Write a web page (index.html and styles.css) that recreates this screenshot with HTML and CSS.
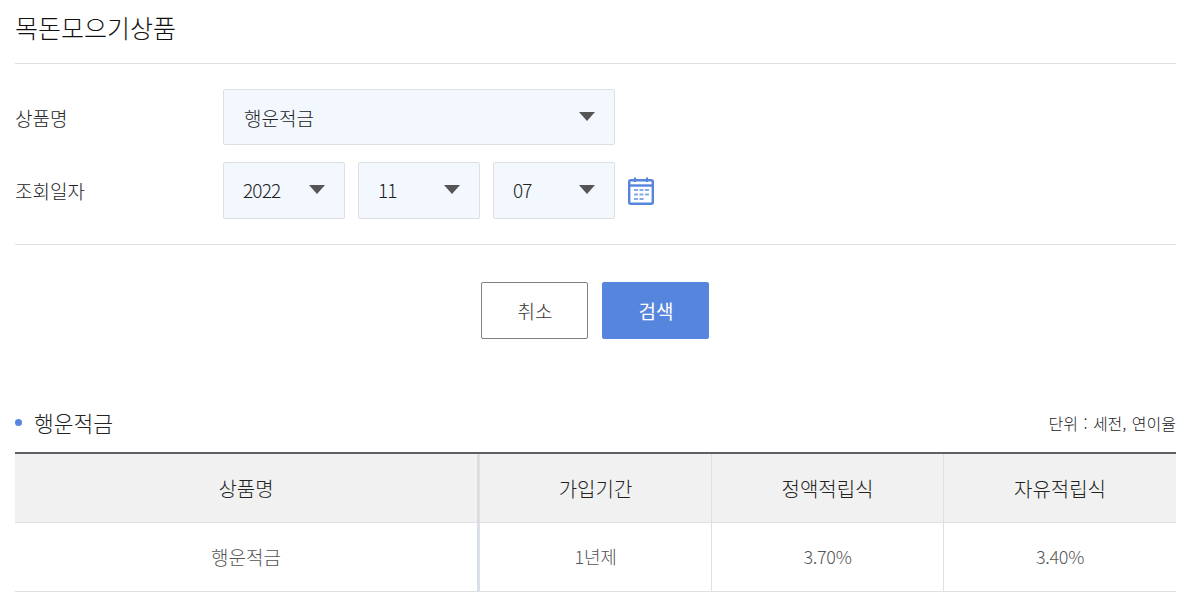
FILE: index.html
```html
<!DOCTYPE html>
<html lang="ko">
<head>
    <meta charset="UTF-8">
    <title>목돈모으기상품</title>
    <link rel="stylesheet" href="styles.css">
</head>
<body>
    <h1 class="page-title">목돈모으기상품</h1>

    <div class="search-form">
        <div class="form-row">
            <span class="form-label">상품명</span>
            <div class="select select-wide">행운적금<i class="arrow"></i></div>
        </div>
        <div class="form-row">
            <span class="form-label">조회일자</span>
            <div class="select select-date num">2022<i class="arrow"></i></div>
            <div class="select select-date num">11<i class="arrow"></i></div>
            <div class="select select-date num">07<i class="arrow"></i></div>
            <svg class="calendar" width="26" height="28" viewBox="0 0 26 28">
                <rect x="1.2" y="3.2" width="23.600" height="23.600" rx="1.500" fill="#fff" stroke="#5585dc" stroke-width="2.400"/>
                <path d="M1 8.500H25" stroke="#5585dc" stroke-width="2.400"/>
                <path d="M7 0.500V5M19 0.500V5" stroke="#5585dc" stroke-width="2"/>
                <path d="M6 13H10M11.500 13H15.500M17 13H21M6 17.500H10M11.500 17.500H15.500M17 17.500H21M6 22H10M11.500 22H15.500" stroke="#86a9e8" stroke-width="2.200"/>
            </svg>
        </div>
    </div>

    <div class="button-row">
        <button class="btn btn-cancel">취소</button>
        <button class="btn btn-search">검색</button>
    </div>

    <div class="result-head">
        <h2 class="result-title">행운적금</h2>
        <span class="unit">단위 : 세전, 연이율</span>
    </div>

    <table class="result-table">
        <colgroup>
            <col class="col-name">
            <col class="col-term">
            <col class="col-term">
            <col>
        </colgroup>
        <thead>
            <tr>
                <th class="first">상품명</th>
                <th>가입기간</th>
                <th>정액적립식</th>
                <th>자유적립식</th>
            </tr>
        </thead>
        <tbody>
            <tr>
                <td class="first">행운적금</td>
                <td class="num">1년제</td>
                <td class="num">3.70%</td>
                <td class="num">3.40%</td>
            </tr>
        </tbody>
    </table>
</body>
</html>
```

FILE: styles.css
```css
* {
    box-sizing: border-box;
}

body {
    margin: 0;
    padding: 0 23px 0 15px;
    background: #fff;
    color: #222;
    font-family: "Noto Sans CJK KR", "Noto Sans", sans-serif;
    font-size: 18px;
    font-weight: 300;
    overflow: hidden;
}

.page-title {
    margin: 0;
    height: 64px;
    padding-top: 9px;
    border-bottom: 1px solid #e0e0e0;
    font-size: 25px;
    line-height: 36px;
    font-weight: 300;
    color: #111;
}

.search-form {
    padding: 25px 0 25px;
    border-bottom: 1px solid #e0e0e0;
}

.form-row {
    display: flex;
    align-items: center;
    gap: 13px;
    margin-bottom: 17px;
}

.form-row:last-child {
    margin-bottom: 0;
}

.form-label {
    width: 195px;
    font-size: 19px;
}

.select {
    position: relative;
    display: flex;
    align-items: center;
    padding-left: 20px;
    background: #f3f8fe;
    border: 1px solid #dcdfe3;
    border-radius: 2px;
    font-size: 19px;
}

.select-wide {
    width: 392px;
    height: 56px;
}

.select-date {
    width: 122px;
    height: 57px;
}

.select.num {
    padding-left: 19px;
    padding-bottom: 2px;
    font-size: 19px;
    letter-spacing: -0.8px;
}

.arrow {
    position: absolute;
    right: 19px;
    top: 22px;
    width: 0;
    height: 0;
    border-left: 8.500px solid transparent;
    border-right: 8.500px solid transparent;
    border-top: 9px solid #555;
}

.calendar {
    display: block;
}

.button-row {
    display: flex;
    justify-content: center;
    gap: 14px;
    padding: 37px 2px 0 0;
}

.btn {
    width: 107px;
    height: 57px;
    padding-left: 8px;
    border-radius: 2px;
    font-family: inherit;
    font-size: 19px;
    font-weight: 300;
}

.btn-cancel {
    background: #fff;
    border: 1px solid #808080;
    color: #333;
}

.btn-search {
    background: #5585dc;
    border: 1px solid #5585dc;
    color: #fff;
    font-weight: 400;
}

.result-head {
    display: flex;
    justify-content: space-between;
    align-items: center;
    height: 40px;
    margin-top: 63px;
    margin-bottom: 10px;
}

.result-title {
    position: relative;
    margin: 0;
    padding-left: 19px;
    font-size: 21.500px;
    font-weight: 300;
}

.result-title::before {
    content: "";
    position: absolute;
    left: 0;
    top: 50%;
    width: 7px;
    height: 7px;
    margin-top: -3px;
    border-radius: 50%;
    background: #5585dc;
}

.unit {
    padding-top: 2px;
    font-size: 16px;
    word-spacing: 1px;
}

.result-table {
    width: 100%;
    table-layout: fixed;
    border-collapse: separate;
    border-spacing: 0;
    border-top: 2px solid #5f6066;
}

.col-name {
    width: 464px;
}

.col-term {
    width: 232px;
}

.result-table th,
.result-table td {
    text-align: center;
    font-weight: 300;
    border-left: 1px solid #dfe0e2;
    border-bottom: 1px solid #dfe0e2;
}

.result-table th {
    height: 69px;
    background: #f1f1f1;
    font-size: 20px;
}

.result-table td {
    height: 69px;
    padding-bottom: 3px;
    font-size: 19px;
    color: #555;
}

.result-table td.num {
    font-size: 18px;
    letter-spacing: -0.3px;
}

.result-table .first {
    border-left: 0;
    border-right: 2px solid #dcdcdc;
}

.result-table td.first {
    border-right-color: #d8dfec;
}
```
